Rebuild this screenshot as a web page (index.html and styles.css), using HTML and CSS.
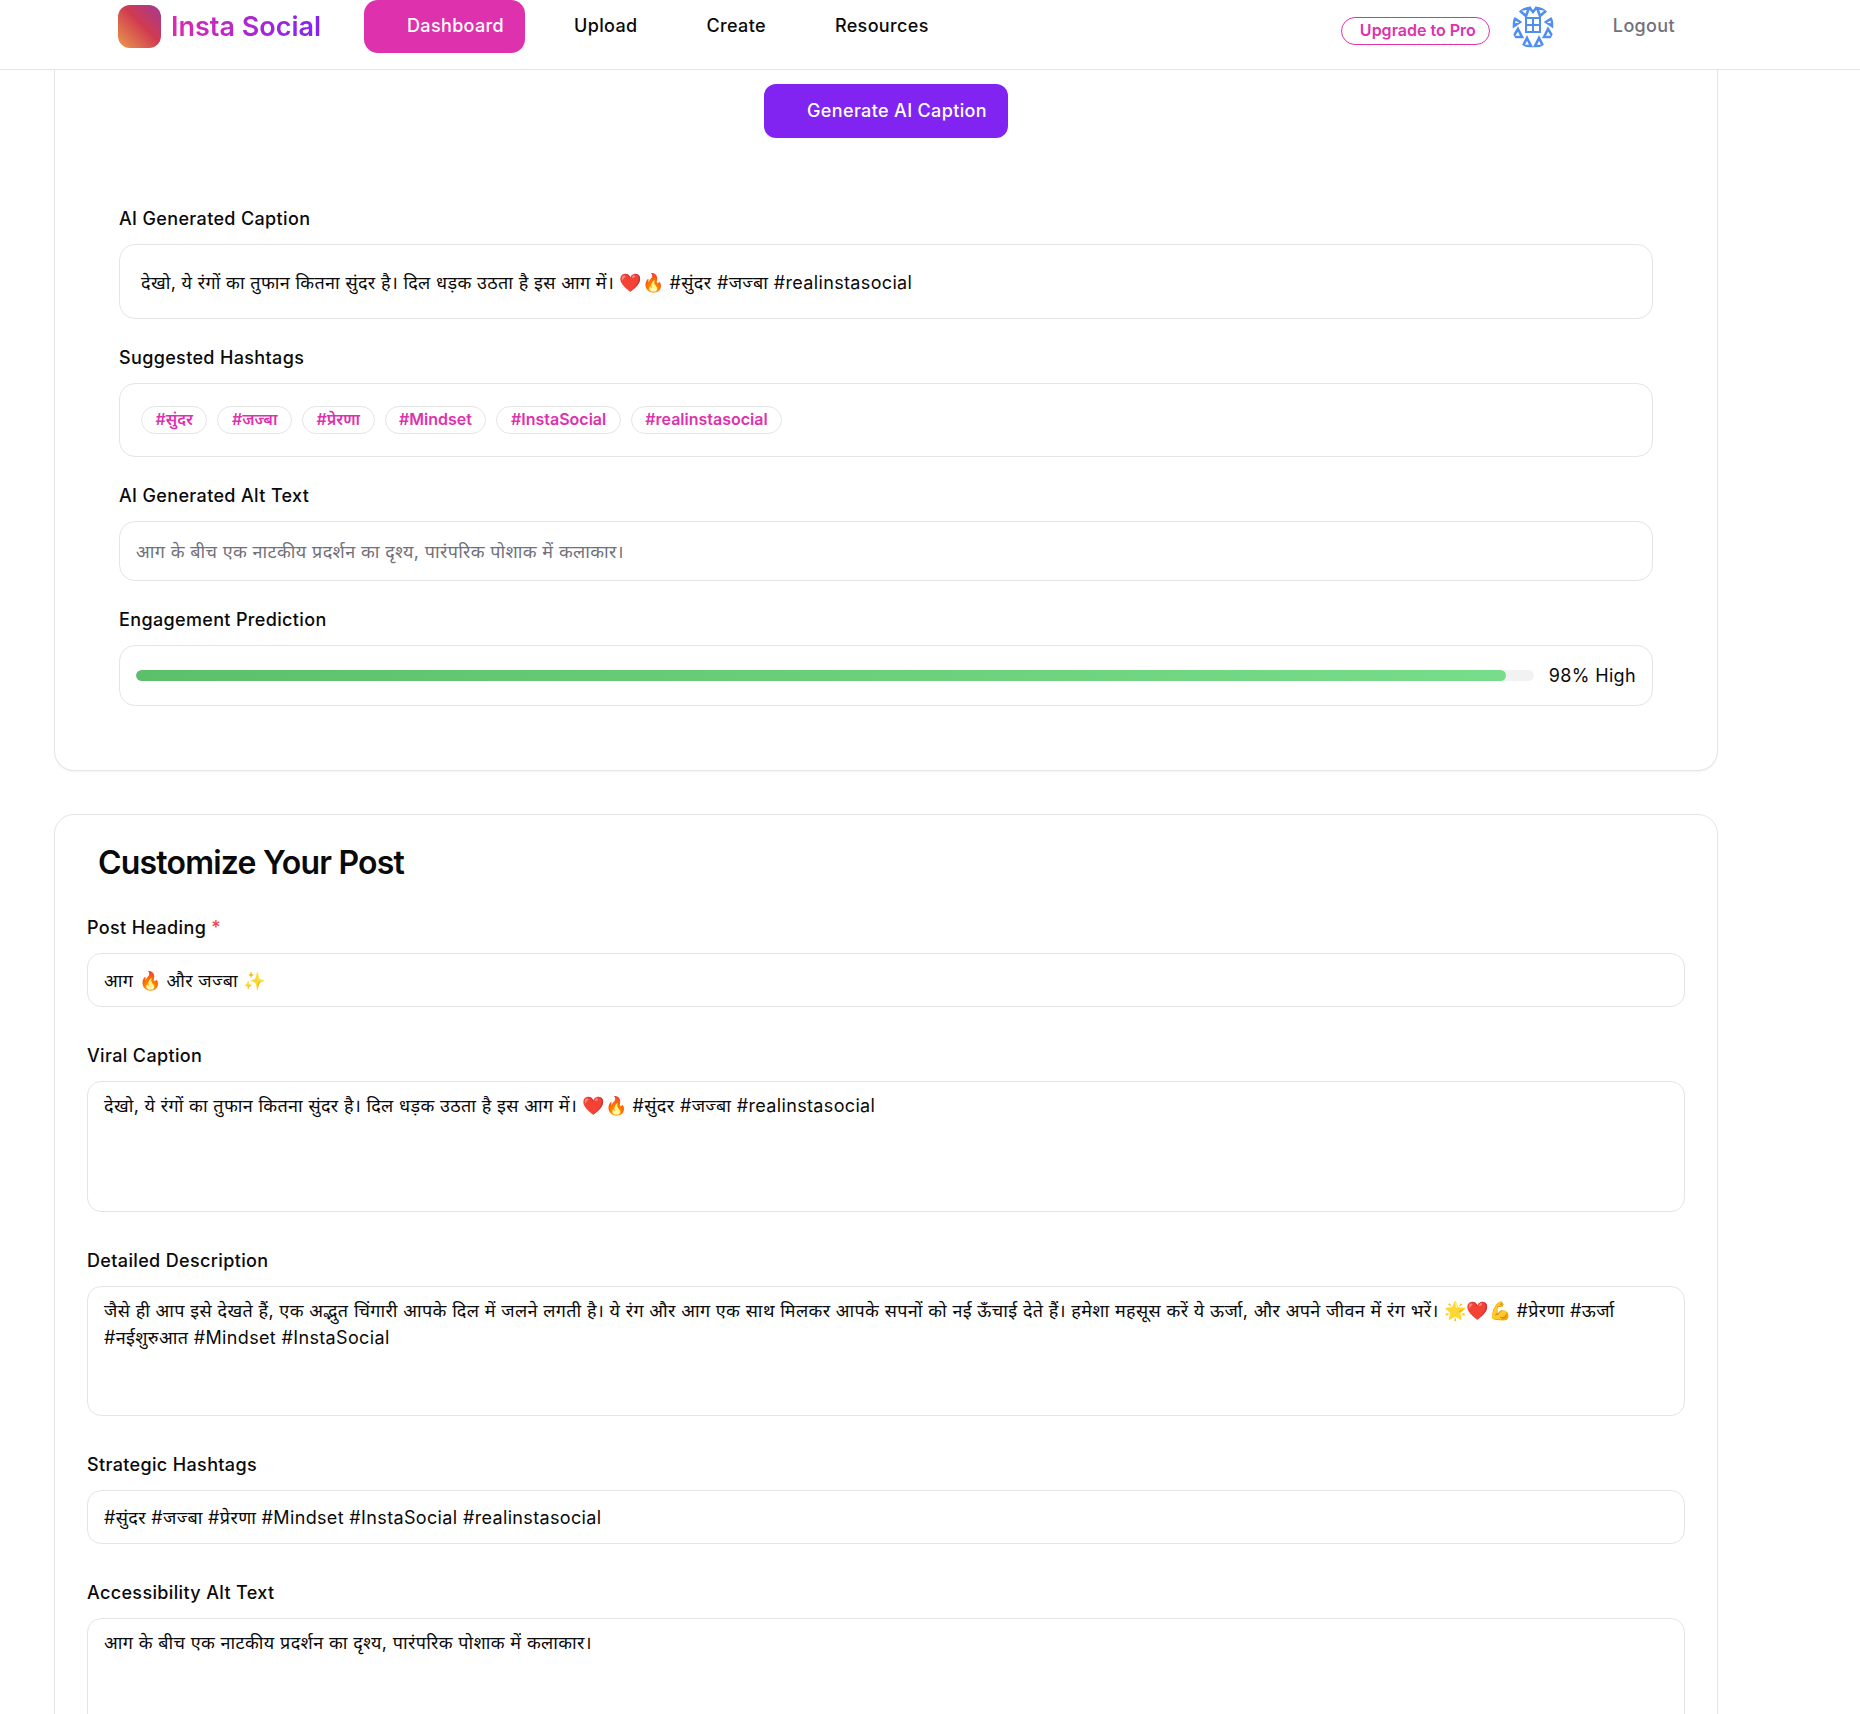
FILE: index.html
```html
<!DOCTYPE html>
<html lang="en">

<head>
    <meta charset="UTF-8">
    <meta name="viewport" content="width=device-width, initial-scale=1.0">
    <title>Insta Social</title>
    <link rel="stylesheet" href="styles.css">
</head>

<body>
    <header class="topbar">
        <div class="brand">
            <span class="brand-logo"></span>
            <span class="brand-name">Insta Social</span>
        </div>
        <nav class="nav">
            <a class="nav-link nav-active">Dashboard</a>
            <a class="nav-link">Upload</a>
            <a class="nav-link">Create</a>
            <a class="nav-link">Resources</a>
        </nav>
        <div class="account">
            <a class="upgrade">Upgrade to Pro</a>
            <svg class="avatar" viewBox="0 0 42 42">
                <defs>
                    <clipPath id="disc"><circle cx="21" cy="21" r="21"/></clipPath>
                </defs>
                <g clip-path="url(#disc)">
                    <path d="M13 11h16v16H13z" fill="#4f8ff0"/>
                    <path d="M15 13h5v5h-5zM22 13h5v5h-5zM15 20h5v5h-5zM22 20h5v5h-5z" fill="#fff"/>
                    <g fill="none" stroke="#4f8ff0" stroke-width="2.6">
                        <path d="M7 4l10-2-3 8zM35 4L25 2l3 8zM2 12l6 4-6 4zM40 12l-6 4 6 4z"/>
                        <path d="M6 23l4 8H1zM36 23l-4 8h9zM15 32l4 8h-8zM27 32l-4 8h8z"/>
                        <path d="M17 1l4 5 4-5"/>
                    </g>
                </g>
            </svg>
            <a class="logout">Logout</a>
        </div>
    </header>

    <main class="page">
        <section class="card card-first">
            <div class="generate-row">
                <button class="generate">Generate AI Caption</button>
            </div>

            <div class="result-block">
                <h3 class="result-label">AI Generated Caption</h3>
                <div class="result-box caption-box">देखो, ये रंगों का तुफान कितना सुंदर है। दिल धड़क उठता है इस आग में। ❤️🔥 #सुंदर #जज्बा #realinstasocial</div>
            </div>

            <div class="result-block">
                <h3 class="result-label">Suggested Hashtags</h3>
                <div class="result-box tags-box">
                    <span class="tag">#सुंदर</span>
                    <span class="tag">#जज्बा</span>
                    <span class="tag">#प्रेरणा</span>
                    <span class="tag">#Mindset</span>
                    <span class="tag">#InstaSocial</span>
                    <span class="tag">#realinstasocial</span>
                </div>
            </div>

            <div class="result-block">
                <h3 class="result-label">AI Generated Alt Text</h3>
                <div class="result-box alt-box">आग के बीच एक नाटकीय प्रदर्शन का दृश्य, पारंपरिक पोशाक में कलाकार।</div>
            </div>

            <div class="result-block">
                <h3 class="result-label">Engagement Prediction</h3>
                <div class="result-box meter-box">
                    <div class="meter"><div class="meter-fill" style="width: 98%"></div></div>
                    <span class="meter-value">98% High</span>
                </div>
            </div>
        </section>

        <section class="card card-form">
            <h2 class="form-title">Customize Your Post</h2>

            <div class="field">
                <label class="field-label">Post Heading <span class="required">*</span></label>
                <input class="field-input" type="text" value="आग 🔥 और जज्बा ✨">
            </div>
            <div class="field">
                <label class="field-label">Viral Caption</label>
                <textarea class="field-input field-area">देखो, ये रंगों का तुफान कितना सुंदर है। दिल धड़क उठता है इस आग में। ❤️🔥 #सुंदर #जज्बा #realinstasocial</textarea>
            </div>
            <div class="field">
                <label class="field-label">Detailed Description</label>
                <textarea class="field-input field-area">जैसे ही आप इसे देखते हैं, एक अद्भुत चिंगारी आपके दिल में जलने लगती है। ये रंग और आग एक साथ मिलकर आपके सपनों को नई ऊँचाई देते हैं। हमेशा महसूस करें ये ऊर्जा, और अपने जीवन में रंग भरें। 🌟❤️💪 #प्रेरणा #ऊर्जा #नईशुरुआत #Mindset #InstaSocial</textarea>
            </div>
            <div class="field">
                <label class="field-label">Strategic Hashtags</label>
                <input class="field-input" type="text" value="#सुंदर #जज्बा #प्रेरणा #Mindset #InstaSocial #realinstasocial">
            </div>
            <div class="field">
                <label class="field-label">Accessibility Alt Text</label>
                <textarea class="field-input field-area">आग के बीच एक नाटकीय प्रदर्शन का दृश्य, पारंपरिक पोशाक में कलाकार।</textarea>
            </div>
        </section>
    </main>
</body>

</html>
```

FILE: styles.css
```css
* {
    margin: 0;
    padding: 0;
    box-sizing: border-box;
}

html,
body {
    height: 1714px;
    overflow: hidden;
}

body {
    font-family: Inter, "Noto Sans", "Noto Sans Devanagari", sans-serif;
    font-size: 18px;
    letter-spacing: 0.35px;
    color: #0a0a0a;
    background: #fff;
}

.topbar {
    display: flex;
    align-items: flex-start;
    height: 70px;
    padding: 0 185px 0 118px;
    border-bottom: 1px solid #e5e5e5;
}

.brand {
    display: flex;
    align-items: center;
    gap: 10px;
    width: 246px;
    padding-top: 5px;
}

.brand-logo {
    width: 43px;
    height: 43px;
    border-radius: 12px;
    background: linear-gradient(to top right, #eb9a4a, #cf3b50 55%, #a33a96);
}

.brand-name {
    font-size: 27px;
    font-weight: 600;
    letter-spacing: 0;
    background: linear-gradient(90deg, #e02aae, #8124f2);
    -webkit-background-clip: text;
    background-clip: text;
    color: transparent;
}

.nav {
    display: flex;
    align-items: flex-start;
}

.nav-link {
    padding: 15px 21px 0 0;
    height: 53px;
    font-weight: 450;
    margin-right: 48px;
}

.nav-active {
    width: 161px;
    padding-left: 43px;
    margin-right: 49px;
    color: #fff;
    background: #de31ae;
    border-radius: 14px;
}

.account {
    display: flex;
    align-items: flex-start;
    margin-left: auto;
}

.upgrade {
    width: 149px;
    height: 28px;
    margin-top: 17px;
    padding-left: 18px;
    line-height: 25px;
    font-size: 16px;
    font-weight: 600;
    letter-spacing: 0;
    color: #de31ae;
    border: 1.5px solid #de31ae;
    border-radius: 14px;
}

.avatar {
    width: 42px;
    height: 42px;
    margin: 6px 0 0 22px;
}

.logout {
    margin: 15px 0 0 59px;
    font-weight: 450;
    color: #71717a;
}

.page {
    width: 1718px;
    padding-left: 54px;
}

.card {
    border: 1px solid #e5e5e5;
    border-radius: 20px;
    box-shadow: 0 1px 2px rgba(0, 0, 0, 0.05);
}

.card-first {
    height: 701px;
    padding: 14px 64px 0;
    border-top: 0;
    border-top-left-radius: 0;
    border-top-right-radius: 0;
}

.generate-row {
    display: flex;
    justify-content: center;
    margin-bottom: 69px;
}

.generate {
    width: 244px;
    height: 54px;
    padding: 0 0 2px 22px;
    font: 450 18px Inter, sans-serif;
    letter-spacing: 0.35px;
    color: #fff;
    background: #8124f2;
    border: 0;
    border-radius: 12px;
}

.result-block {
    margin-bottom: 27px;
}

.result-label {
    margin-bottom: 13px;
    font-size: 18px;
    font-weight: 450;
    line-height: 24px;
}

.result-box {
    display: flex;
    align-items: center;
    border: 1px solid #e5e5e5;
    border-radius: 16px;
    padding: 0 21px;
}

.caption-box {
    height: 75px;
}

.tags-box {
    height: 74px;
    gap: 10px;
}

.tag {
    height: 28px;
    padding: 0 13.5px;
    font-size: 16px;
    font-weight: 600;
    letter-spacing: 0;
    line-height: 25px;
    color: #de31ae;
    border: 1px solid #e5e5e5;
    border-radius: 14px;
}

.alt-box {
    height: 60px;
    padding: 0 16px;
    color: #71717a;
}

.meter-box {
    height: 61px;
    padding: 0 16px;
    gap: 15px;
}

.meter {
    flex: 1;
    height: 11px;
    background: #f2f2f2;
    border-radius: 6px;
    overflow: hidden;
}

.meter-fill {
    height: 100%;
    background: linear-gradient(90deg, #5cbf6c, #78dd8a);
    border-radius: 6px;
}

.card-form {
    height: 1000px;
    margin-top: 43px;
    padding: 28px 32px 0;
}

.form-title {
    margin: 0 0 33px 11px;
    font-size: 32px;
    font-weight: 600;
    line-height: 40px;
    letter-spacing: -0.8px;
}

.field {
    margin-bottom: 37px;
}

.field-label {
    display: block;
    margin-bottom: 13px;
    font-weight: 450;
    line-height: 24px;
}

.required {
    color: #ef4444;
}

.field-input {
    display: block;
    width: 100%;
    height: 54px;
    padding: 0 16px;
    font: 18px/27px Inter, "Noto Sans", "Noto Sans Devanagari", sans-serif;
    letter-spacing: 0.35px;
    color: #0a0a0a;
    border: 1px solid #e5e5e5;
    border-radius: 14px;
    outline: none;
}

.field-area {
    height: 130.5px;
    padding: 10px 16px;
    resize: none;
}
```
